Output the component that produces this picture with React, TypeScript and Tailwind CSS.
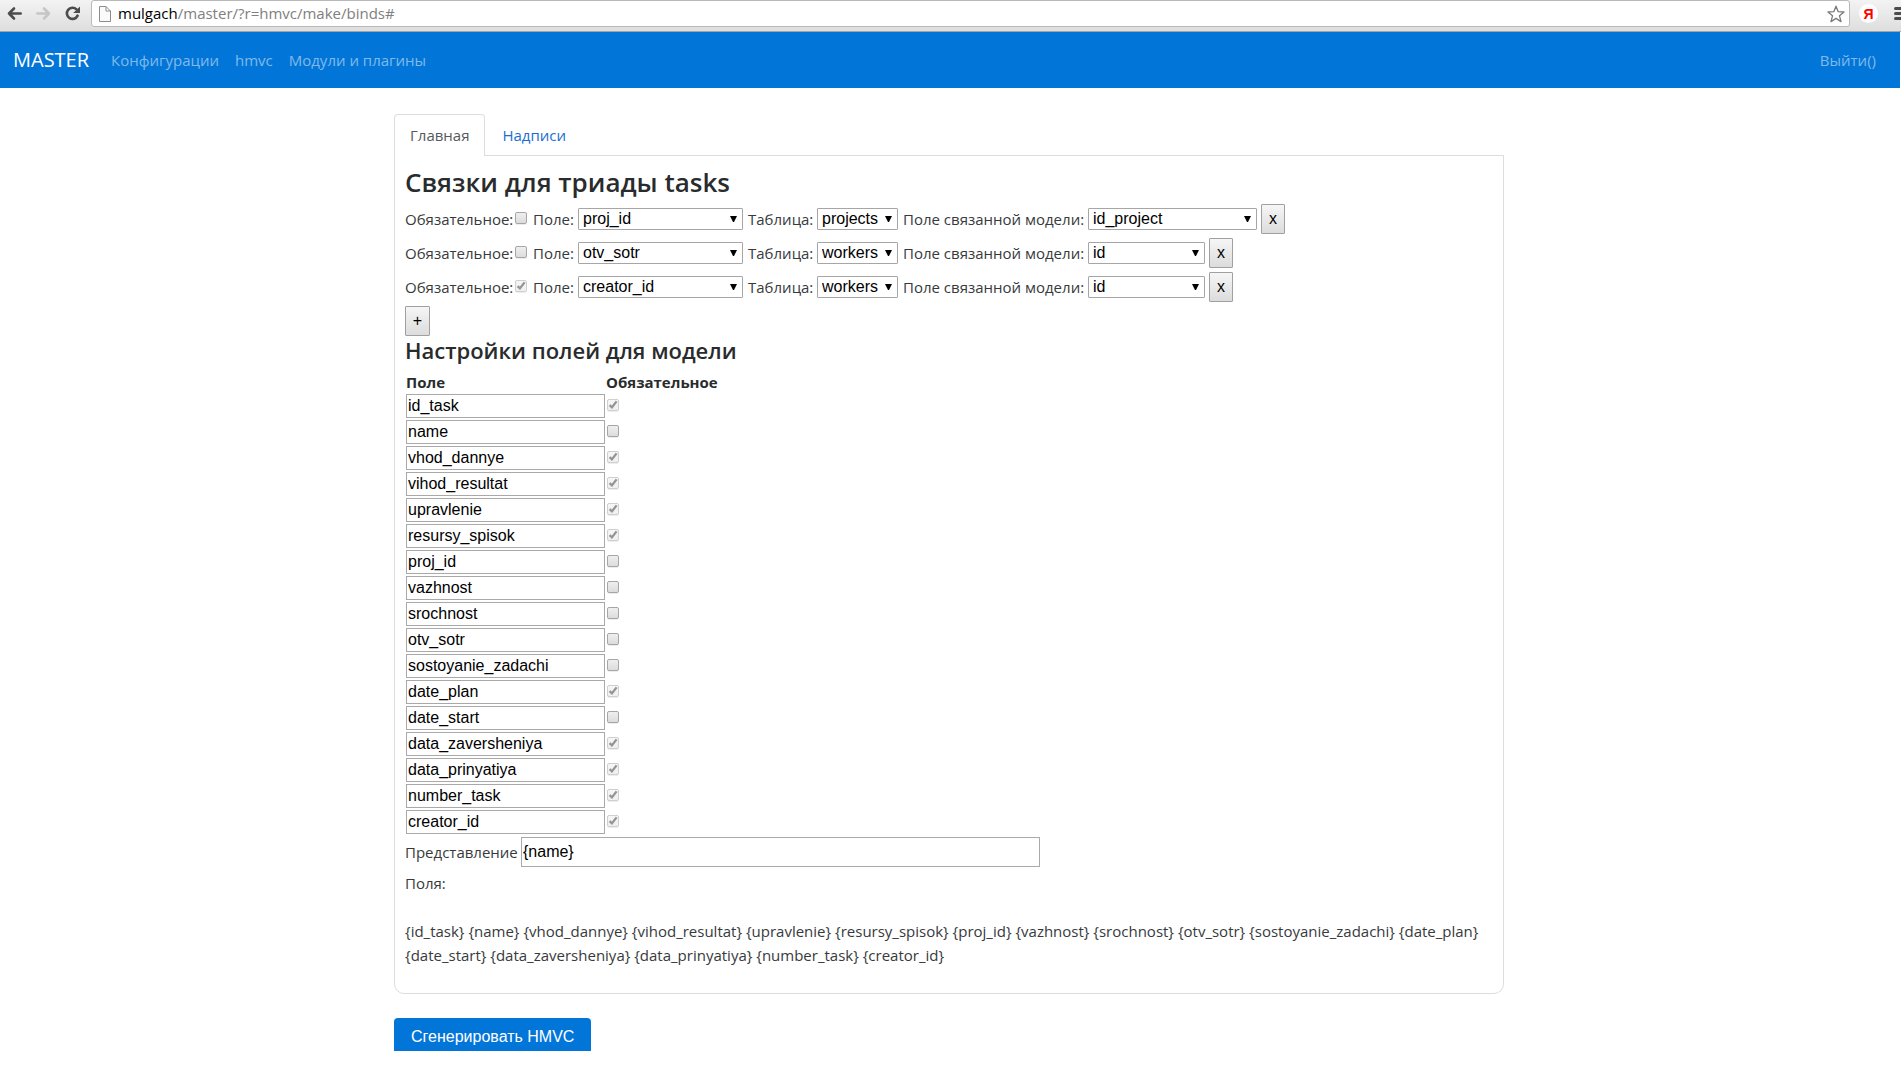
import React from 'react';

const binds = [
  { field: 'proj_id', table: 'projects', related: 'id_project', required: false, wide: true },
  { field: 'otv_sotr', table: 'workers', related: 'id', required: false, wide: false },
  { field: 'creator_id', table: 'workers', related: 'id', required: true, wide: false },
];

const fields = [
  { name: 'id_task', required: true },
  { name: 'name', required: false },
  { name: 'vhod_dannye', required: true },
  { name: 'vihod_resultat', required: true },
  { name: 'upravlenie', required: true },
  { name: 'resursy_spisok', required: true },
  { name: 'proj_id', required: false },
  { name: 'vazhnost', required: false },
  { name: 'srochnost', required: false },
  { name: 'otv_sotr', required: false },
  { name: 'sostoyanie_zadachi', required: false },
  { name: 'date_plan', required: true },
  { name: 'date_start', required: false },
  { name: 'data_zaversheniya', required: true },
  { name: 'data_prinyatiya', required: true },
  { name: 'number_task', required: true },
  { name: 'creator_id', required: true },
];

function BrowserBar() {
  return (
    <div className="flex h-8 shrink-0 items-start overflow-hidden border-b border-[#a3a3a3] bg-linear-to-b from-[#f3f3f3] to-[#dedede]">
      <div className="flex h-[27px] shrink-0 items-center gap-[14px] pl-[7px] pr-[11px]">
        <button type="button" aria-label="Назад">
          <svg width="15" height="15" viewBox="0 0 15 15" fill="none" stroke="#4d4d4d" strokeWidth="2.600" strokeLinecap="round" strokeLinejoin="round">
            <path d="M7 2.500 2 7.500 7 12.500M2 7.500H13.700" />
          </svg>
        </button>
        <button type="button" aria-label="Вперёд">
          <svg width="15" height="15" viewBox="0 0 15 15" fill="none" stroke="#c6c6c6" strokeWidth="2.600" strokeLinecap="round" strokeLinejoin="round">
            <path d="M8 2.500 13 7.500 8 12.500M13 7.500H1.300" />
          </svg>
        </button>
        <button type="button" aria-label="Обновить">
          <svg width="15" height="15" viewBox="0 0 15 15" fill="none">
            <path d="M11.500 3.400A5.600 5.600 0 1 0 12.600 9.600" stroke="#4d4d4d" strokeWidth="2.600" strokeLinecap="round" />
            <path d="M15 .5v6.500H8.200z" fill="#4d4d4d" />
          </svg>
        </button>
      </div>
      <div className="flex h-[27px] min-w-0 flex-1 items-center rounded-[3px] border border-[#b9b9b9] bg-white pl-[7px] pr-1">
        <svg className="mr-[7px] shrink-0" width="12" height="16" viewBox="0 0 12 16" fill="#fafafa" stroke="#8c8c8c">
          <path d="M.5 .5h6.5l4.5 4.5v10.500h-11zM7 .5V5h4.500" />
        </svg>
        <div className="flex-1 pb-[2px] text-[15px] leading-5 text-[#808080]">
          <span className="text-black">mulgach</span>/master/?r=hmvc/make/binds#
        </div>
        <button type="button" aria-label="Добавить в закладки">
          <svg width="18" height="18" viewBox="0 0 18 18" fill="none" stroke="#7a7a7a" strokeWidth="1.300" strokeLinejoin="round">
            <path d="M9 1.200 11.200 6.700 17 7 12.500 10.800 14 16.600 9 13.400 4 16.600 5.500 10.800 1 7 6.800 6.700z" />
          </svg>
        </button>
      </div>
      <div className="flex h-[27px] shrink-0 items-center gap-4 overflow-hidden pl-[9px]">
        <button type="button" className="flex size-[19px] items-center justify-center rounded-full bg-white font-['Liberation_Sans',sans-serif] text-sm font-bold leading-none text-[#f00]">
          Я
        </button>
        <div className="w-[7px] overflow-hidden">
          <button type="button" aria-label="Меню" className="block">
            <svg width="15" height="13" viewBox="0 0 15 13" stroke="#4d4d4d" strokeWidth="3" strokeLinecap="round">
              <path d="M1.500 1.500h12M1.500 6.500h12M1.500 11.500h12" />
            </svg>
          </button>
        </div>
      </div>
    </div>
  );
}

function NavBar() {
  return (
    <nav className="mr-px flex h-14 shrink-0 items-center bg-[#0275d8] pl-[13px] pr-6 text-[15px] text-[#80baeb]">
      <a href="#" className="mr-[22px] text-[20px] text-white">MASTER</a>
      <div className="flex flex-1 gap-4">
        <a href="#">Конфигурации</a>
        <a href="#">hmvc</a>
        <a href="#">Модули и плагины</a>
      </div>
      <a href="#">Выйти()</a>
    </nav>
  );
}

function Check({ checked, label }: { checked: boolean; label: string }) {
  return (
    <span className="relative block size-3">
      <input
        type="checkbox"
        aria-label={label}
        defaultChecked={checked}
        disabled={checked}
        className="block size-3 appearance-none rounded-[2px] border border-[#a6a6a6] bg-linear-to-b from-[#efefef] to-[#dcdcdc] shadow-[0_1px_0_#ededed] disabled:border-[#cfcfcf] disabled:from-[#f6f6f6] disabled:to-[#efefef]"
      />
      {checked && (
        <svg className="pointer-events-none absolute inset-0" width="12" height="12" viewBox="0 0 12 12" fill="none" stroke="#949494" strokeWidth="2.300">
          <path d="M2.600 6.200 4.900 8.400 9.600 2.400" />
        </svg>
      )}
    </span>
  );
}

function Select({ value, label, width }: { value: string; label: string; width: string }) {
  return (
    <span className={`relative block ${width}`}>
      <select
        aria-label={label}
        defaultValue={value}
        className="block h-[22px] w-full appearance-none rounded-[1px] border border-[#a6a6a6] bg-white pl-1 font-['Liberation_Sans',sans-serif] text-base leading-5 text-black"
      >
        <option>{value}</option>
      </select>
      <svg className="pointer-events-none absolute right-[6px] top-2" width="7" height="6" viewBox="0 0 7 6">
        <path d="M0 0h7L4 6H3z" fill="#000" />
      </svg>
    </span>
  );
}

function GrayButton({ children, width }: { children: React.ReactNode; width: string }) {
  return (
    <button
      type="button"
      className={`block h-[30px] rounded-[1px] border border-[#a0a0a0] bg-linear-to-b from-[#f6f6f6] to-[#dcdcdc] font-['Liberation_Sans',sans-serif] text-base leading-6 text-black ${width}`}
    >
      {children}
    </button>
  );
}

export default function App() {
  return (
    <div className="flex h-screen flex-col bg-white pb-[29px] font-['Open_Sans','Noto_Sans',sans-serif] text-[15px] leading-6 text-[#373a3c]">
      <BrowserBar />
      <NavBar />
      <main className="min-h-0 flex-1 overflow-hidden pr-[3px] pt-[26px]">
        <div className="mx-auto max-w-[1110px]">
          <div className="flex" role="tablist">
            <button type="button" role="tab" aria-selected="true" className="relative z-10 -mb-px h-[42px] rounded-t-[4px] border border-b-0 border-[#ddd] bg-white px-[15px] pb-[2px] text-[#55595c]">
              Главная
            </button>
            <button type="button" role="tab" aria-selected="false" className="h-[41px] px-[17px] text-[#1b6ed0]">
              Надписи
            </button>
          </div>
          <section className="rounded-b-[10px] border border-[#ddd] px-[10px] pb-5">
            <h1 className="pb-1 pt-2 text-[26px] font-semibold leading-9 text-[#292b2c]">Связки для триады tasks</h1>
            <div className="flex flex-col gap-1">
              {binds.map((b) => (
                <div key={b.field} className="flex h-[30px] items-center">
                  <span className="w-[110px] whitespace-nowrap">Обязательное:</span>
                  <span className="pb-[2px]">
                    <Check checked={b.required} label="Обязательное" />
                  </span>
                  <span className="w-[51px] pl-[6px]">Поле:</span>
                  <Select value={b.field} label="Поле" width="w-[165px]" />
                  <span className="w-[74px] whitespace-nowrap pl-[5px]">Таблица:</span>
                  <Select value={b.table} label="Таблица" width="w-[81px]" />
                  <span className="w-[190px] whitespace-nowrap pl-[5px]">Поле связанной модели:</span>
                  <Select value={b.related} label="Поле связанной модели" width={b.wide ? 'w-[169px]' : 'w-[117px]'} />
                  <span className="pl-1">
                    <GrayButton width="w-6">x</GrayButton>
                  </span>
                </div>
              ))}
              <div className="flex">
                <GrayButton width="w-[25px]">+</GrayButton>
              </div>
            </div>
            <h2 className="text-[22px] font-semibold leading-7 text-[#292b2c]">Настройки полей для модели</h2>
            <table className="mt-[6px] border-separate border-spacing-x-px border-spacing-y-0">
              <thead>
                <tr className="h-6 text-left text-[#292b2c]">
                  <th className="p-0 font-bold">Поле</th>
                  <th className="p-0 font-bold">Обязательное</th>
                </tr>
              </thead>
              <tbody>
                {fields.map((f) => (
                  <tr key={f.name}>
                    <td className="p-0 pb-[2px]">
                      <input
                        type="text"
                        aria-label="Поле"
                        defaultValue={f.name}
                        className="block h-6 w-[199px] border border-[#a9a9a9] bg-white px-px font-['Liberation_Sans',sans-serif] text-base leading-5 text-black"
                      />
                    </td>
                    <td className="p-0 pb-[4px] pl-px">
                      <Check checked={f.required} label={`Обязательное ${f.name}`} />
                    </td>
                  </tr>
                ))}
              </tbody>
            </table>
            <label className="mt-px flex h-[30px] items-center">
              <span className="w-[116px]">Представление</span>
              <input
                type="text"
                defaultValue="{name}"
                className="h-[30px] w-[519px] border border-[#a9a9a9] bg-white px-px font-['Liberation_Sans',sans-serif] text-base text-black"
              />
            </label>
            <p className="mt-1">Поля:</p>
            <p className="mb-[6px] mt-6">{fields.map((f) => `{${f.name}}`).join(' ')}</p>
          </section>
          <button type="button" className="mt-[24px] h-[38px] rounded-[4px] bg-[#0275d8] px-[17px] font-['Liberation_Sans',sans-serif] text-base text-white">
            Сгенерировать HMVC
          </button>
        </div>
      </main>
    </div>
  );
}
